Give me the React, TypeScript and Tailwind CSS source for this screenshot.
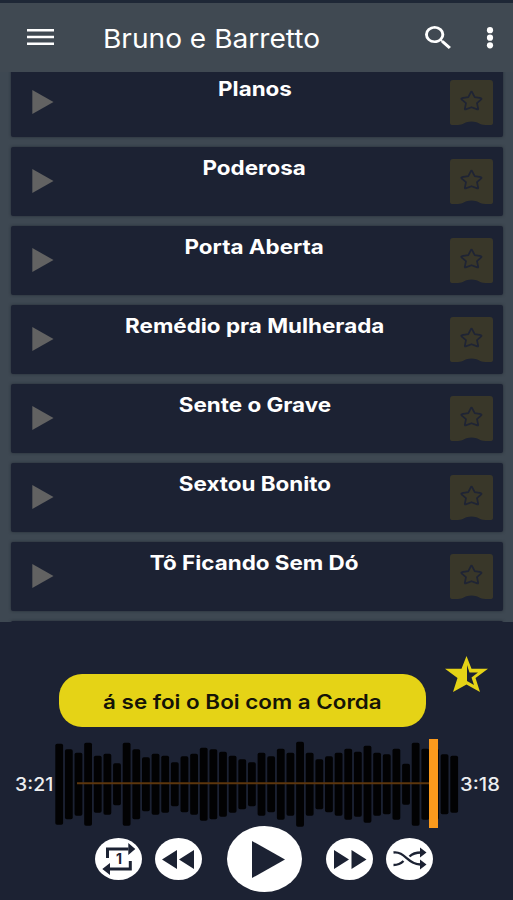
import React from 'react';

const songs = [
  'Planos',
  'Poderosa',
  'Porta Aberta',
  'Remédio pra Mulherada',
  'Sente o Grave',
  'Sextou Bonito',
  'Tô Ficando Sem Dó',
];

const bars = [
  81, 70, 63, 83, 57, 61, 42, 83, 70, 54, 61, 57, 44, 56, 61, 73, 70, 65, 57, 50, 44,
  63, 56, 71, 63, 85, 63, 50, 56, 63, 71, 65, 77, 63, 60, 71, 41, 83, 71, 71, 60, 57,
];

const FavoriteFlag: React.FC = () => (
  <svg className="h-[45px] w-[43px]" viewBox="0 0 43 45">
    <path d="M3 0H40Q43 0 43 3V43Q43 45 40 45H35C30 45 28 41.500 21.500 41.500S13 45 8 45H3Q0 45 0 43V3Q0 0 3 0Z" fill="#393729" />
    <path
      d="M21 12Q21.500 11 22 12L24.700 17.200L31 18.200Q32 18.500 31.200 19.300L27 23.200L28.200 28.800Q28.300 29.800 27.300 29.400L21.500 27.200L15.700 29.400Q14.700 29.800 14.800 28.800L16 23.200L11.500 19.300Q10.800 18.500 12 18.200L18.300 17.200Z"
      fill="none"
      stroke="#1f2434"
      strokeWidth="1.700"
      strokeLinejoin="round"
    />
  </svg>
);

const SongCard: React.FC<{ title?: string }> = ({ title }) => (
  <div className="flex h-[69px] shrink-0 items-start rounded-[2px] bg-[#1c2233] pl-[21px] pr-[10px] shadow-[0_0_3px_rgba(20,26,36,0.6)]">
    <svg className="mt-[22px] h-[24px] w-[22px] shrink-0" viewBox="0 0 22 24">
      <path d="M0.300 0L21.500 12L0.300 24Z" fill="#626262" />
    </svg>
    <div className="flex flex-1 justify-center pr-[16px] pl-[21px] pt-[7px]">
      <span className="scale-x-[1.12] whitespace-nowrap text-[20px] font-bold leading-[28px] text-white">{title}</span>
    </div>
    <div className="mt-[12px] shrink-0">
      <FavoriteFlag />
    </div>
  </div>
);

const App: React.FC = () => {
  return (
    <div className="flex h-[900px] w-[513px] flex-col overflow-hidden bg-[#3e4852] font-[Inter,sans-serif]">
      {/* Toolbar */}
      <header className="flex h-[72px] shrink-0 items-center border-t-[3px] border-[#1e2736] bg-[#404952] pl-[27px] pr-[19px] text-white">
        <svg className="h-[19px] w-[27px]" viewBox="0 0 27 19">
          <path d="M0 2.300H27M0 9H27M0 15.700H27" stroke="#fff" strokeWidth="2.400" />
        </svg>
        <h1 className="ml-[49px] flex-1 origin-left scale-x-[1.08] whitespace-nowrap pt-[2px] text-[26px] leading-none">Bruno e Barretto</h1>
        <svg className="mr-[35px] h-[23px] w-[26px]" viewBox="3 3 17.500 17.500" preserveAspectRatio="none">
          <path fill="#fff" d="M15.500 14h-.79l-.28-.27A6.471 6.471 0 0 0 16 9.500 6.500 6.500 0 1 0 9.500 16c1.610 0 3.090-.59 4.230-1.570l.27.28v.79l5 4.990L20.490 19l-4.990-5zm-6 0C7.010 14 5 11.990 5 9.500S7.010 5 9.500 5 14 7.010 14 9.500 11.990 14 9.500 14z" />
        </svg>
        <svg className="h-[22px] w-[8px]" viewBox="0 0 8 22">
          <circle cx="4" cy="3.200" r="3.100" fill="#fff" />
          <circle cx="4" cy="10.700" r="3.100" fill="#fff" />
          <circle cx="4" cy="18.300" r="3.100" fill="#fff" />
        </svg>
      </header>

      {/* Song list */}
      <main className="h-[550px] shrink-0 overflow-hidden pl-[11px] pr-[10px]">
        <div className="-mt-1 flex flex-col gap-[10px]">
          {songs.map((title) => (
            <SongCard key={title} title={title} />
          ))}
          <SongCard />
        </div>
      </main>

      {/* Player */}
      <footer className="flex h-[278px] shrink-0 flex-col bg-[#1c2233]">
        <div className="flex items-start pl-[59px]">
          <div className="mt-[52px] flex h-[53px] w-[367px] items-center justify-center rounded-[23px] bg-[#e5d316]">
            <span className="scale-x-[1.12] whitespace-nowrap pt-[3px] text-[20px] font-semibold text-[#151407]">á se foi o Boi com a Corda</span>
          </div>
          <svg className="ml-[19px] mt-[34px] h-[37px] w-[43px]" viewBox="0 0 43 37">
            <path d="M21.500 0L26.500 12.700H43L30.500 22L35 36L21.500 28.500L8 36L12.500 22L0 12.700H16.500Z" fill="#e5d316" />
            <path d="M22 9L24.500 16.500H33L26.500 21.500L29 29L22 25Z" fill="#1c2233" />
          </svg>
        </div>

        <div className="mt-[12px] flex h-[89px] items-center">
          <span className="w-[55px] origin-left scale-x-[1.08] pl-[14px] pt-[2px] text-[18px] font-medium text-[#eceef0]">3:21</span>
          <svg className="h-[89px] w-[404px]" viewBox="0 0 404 89">
            {bars.map((h, i) => (
              <rect key={i} x={0.3 + i * 9.634} y={45.2 - h / 2} width="7.800" height={h} rx="1.800" fill="#020203" />
            ))}
            <path d="M22 44.200H382" stroke="#5c360d" strokeWidth="2" />
            <rect x="374" y="0" width="9" height="89" fill="#fb9a1d" />
          </svg>
          <span className="origin-left scale-x-[1.12] pl-[1px] pt-[2px] text-[18px] font-medium text-[#eceef0]">3:18</span>
        </div>

        <div className="-mt-[2px] flex items-center pl-[95px]">
          <svg className="h-[42px] w-[47px]" viewBox="0 0 47 42">
            <ellipse cx="23.500" cy="21" rx="23.500" ry="21" fill="#fff" />
            <path d="M12.500 20V11H33.500M35.300 23V31H14" fill="none" stroke="#1c2233" strokeWidth="3" />
            <path d="M33.300 5L40.300 11L33.300 17ZM15 25V37L7.300 31Z" fill="#1c2233" />
            <text x="24" y="26" textAnchor="middle" className="fill-[#1c2233] text-[14px] font-bold">1</text>
          </svg>
          <svg className="ml-[13px] h-[42px] w-[47px]" viewBox="0 0 47 42">
            <ellipse cx="23.500" cy="21" rx="23.500" ry="21" fill="#fff" />
            <path d="M22 12V31L7 21.500ZM39 12V31L24 21.500Z" fill="#1c2233" />
          </svg>
          <svg className="ml-[25px] h-[66px] w-[75px]" viewBox="0 0 75 66">
            <ellipse cx="37.500" cy="33" rx="37.500" ry="33" fill="#fff" />
            <path d="M25 15V52L58 33.500Z" fill="#1c2233" />
          </svg>
          <svg className="ml-[24px] h-[42px] w-[47px]" viewBox="0 0 47 42">
            <ellipse cx="23.500" cy="21" rx="23.500" ry="21" fill="#fff" />
            <path d="M8 12V31L23 21.500ZM25.500 12V31L40.500 21.500Z" fill="#1c2233" />
          </svg>
          <svg className="ml-[13px] h-[42px] w-[47px]" viewBox="0 0 47 42">
            <ellipse cx="23.500" cy="21" rx="23.500" ry="21" fill="#fff" />
            <path d="M7.500 14.500C19 13 22 27 35 26.500M7.500 27C12 27 14.500 26 17.500 23M23.500 18.500C26.500 15.500 30 14.500 35 14.500" fill="none" stroke="#1c2233" strokeWidth="2.300" />
            <path d="M34 9.500L40.500 14.500L34 19.500ZM34 21.500L40.500 26.500L34 31.500Z" fill="#1c2233" />
          </svg>
        </div>
      </footer>
    </div>
  );
};

export default App;
